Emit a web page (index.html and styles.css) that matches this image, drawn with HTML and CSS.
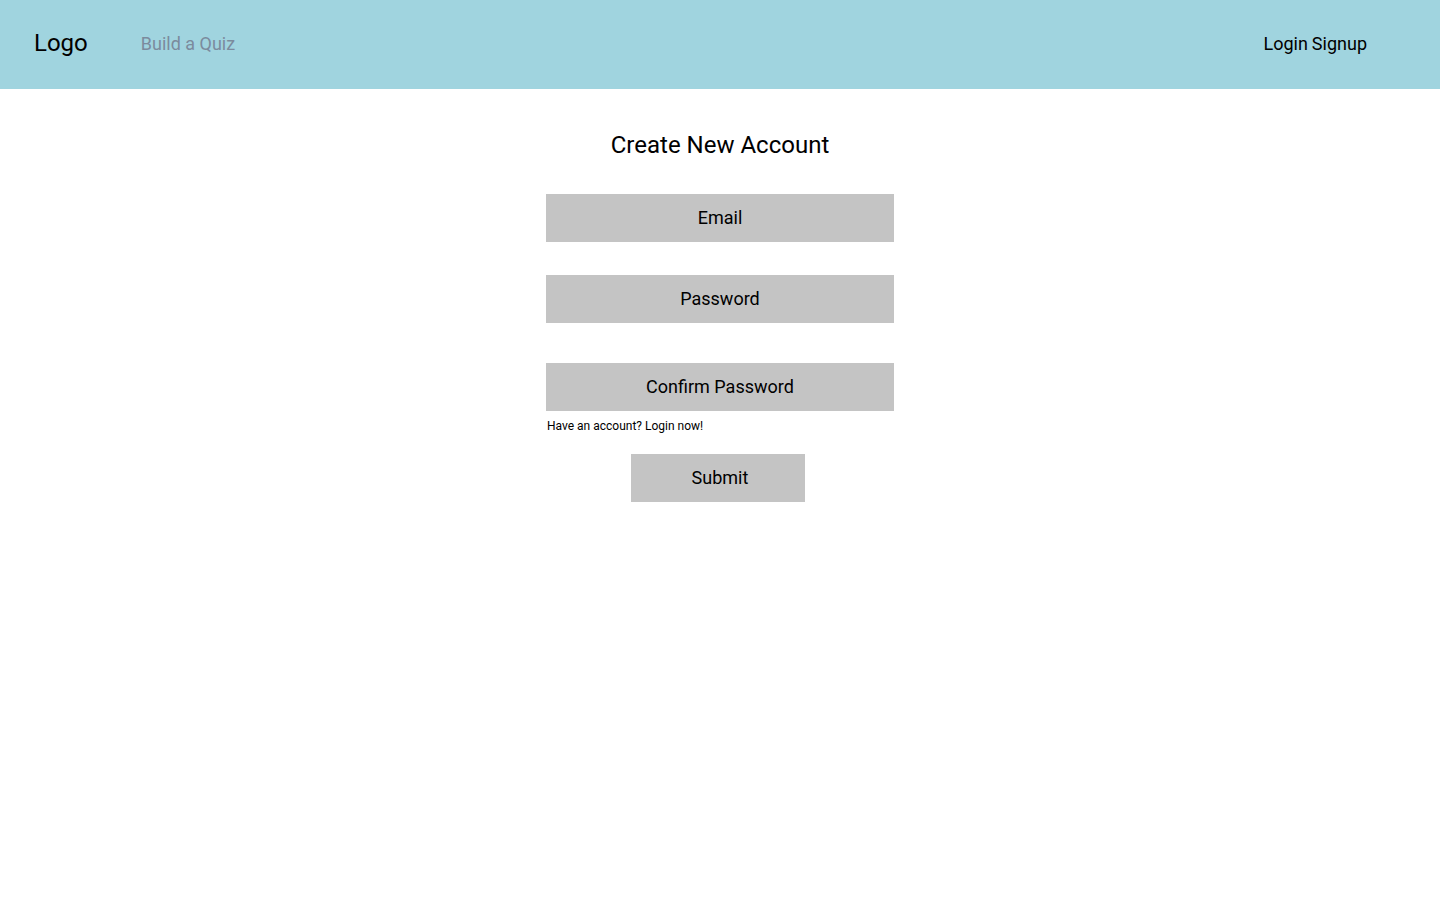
FILE: index.html
```html
<!DOCTYPE html>
<html lang="en">
<head>
<meta charset="utf-8">
<title>Create New Account</title>
<link rel="stylesheet" href="styles.css">
</head>
<body>
<header class="topbar">
  <div class="logo">Logo</div>
  <nav class="nav-left"><a class="nav-link muted" href="#">Build a Quiz</a></nav>
  <nav class="nav-right"><a class="nav-link" href="#">Login</a> <a class="nav-link" href="#">Signup</a></nav>
</header>
<main class="page">
  <h1 class="title">Create New Account</h1>
  <form class="form">
    <input class="field field-email" type="email" placeholder="Email">
    <input class="field field-password" type="password" placeholder="Password">
    <input class="field field-confirm" type="password" placeholder="Confirm Password">
    <p class="helper">Have an account? Login now!</p>
    <button class="submit" type="button">Submit</button>
  </form>
</main>
</body>
</html>
```
FILE: styles.css
```css
* { box-sizing: border-box; }
html, body { margin: 0; padding: 0; background: #fff; }
body { font-family: Roboto, "Liberation Sans", sans-serif; color: #000; }

.topbar {
  height: 89px;
  background: #A0D4DF;
  display: flex;
  align-items: center;
  padding: 0 73px 0 34px;
}
.logo { font-size: 24px; line-height: 28px; margin-top: -3px; }
.nav-left { margin-left: 53px; margin-top: -2px; }
.nav-right { margin-left: auto; margin-top: -2px; }
.nav-link { font-size: 18px; line-height: 22px; color: #000; text-decoration: none; }
.muted { color: #7B8B9D; }

.page { display: flex; flex-direction: column; align-items: center; }
.title {
  margin: 42px 0 0;
  font-size: 24px;
  line-height: 28px;
  font-weight: 400;
}
.form { width: 348px; display: flex; flex-direction: column; margin-top: 35px; }
.field {
  height: 48px;
  border: none;
  background: #C4C4C4;
  font-family: inherit;
  font-size: 18px;
  text-align: center;
  color: #000;
  outline: none;
  padding: 0 0 2px;
}
.field::placeholder { color: #000; opacity: 1; }
.field-password { margin-top: 33px; }
.field-confirm { margin-top: 40px; }
.helper {
  margin: 8px 0 0 1px;
  font-size: 12px;
  line-height: 14px;
}
.submit {
  align-self: center;
  margin: 21px 4px 0 0;
  width: 174px;
  height: 48px;
  border: none;
  background: #C4C4C4;
  font-family: inherit;
  font-size: 18px;
  color: #000;
  padding: 0 0 2px 4px;
}
```
